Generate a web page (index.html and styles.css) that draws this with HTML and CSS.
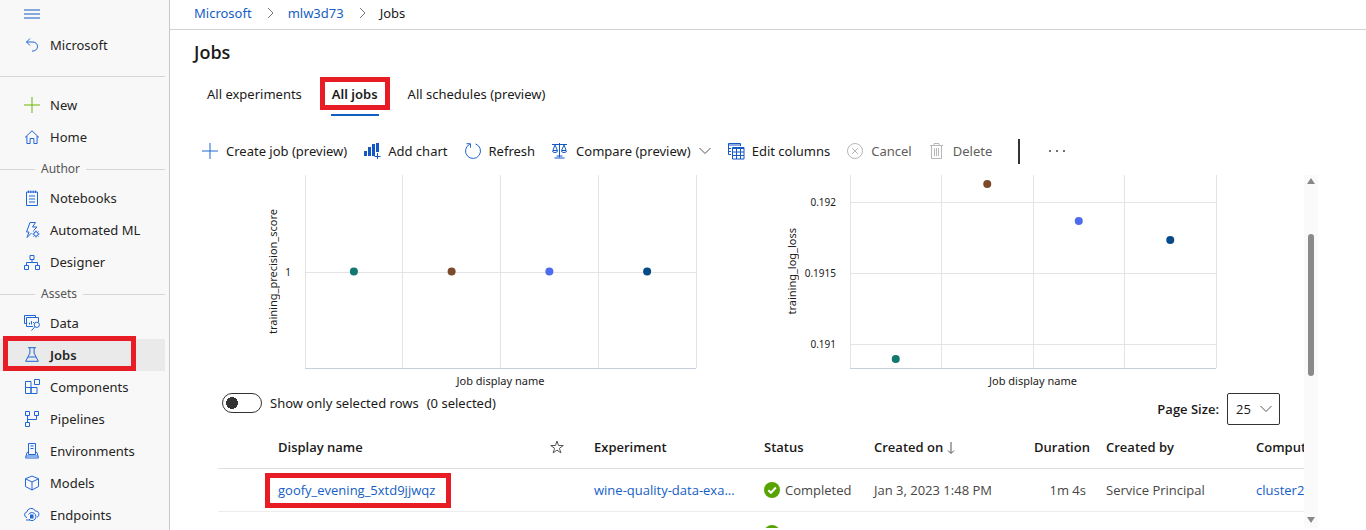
FILE: index.html
```html
<!DOCTYPE html>
<html lang="en">
<head>
<meta charset="utf-8">
<meta name="viewport" content="width=device-width, initial-scale=1">
<title>Jobs</title>
<link rel="stylesheet" href="styles.css">
</head>
<body>
<div class="shell">
  <nav class="sidebar" aria-label="Workspace">
    <button class="menu-button" type="button" aria-label="Toggle menu">
      <svg class="icon icon-strong" viewBox="0 0 16 16"><path d="M0 4h16M0 8h16M0 12h16"/></svg>
    </button>
    <a class="nav-item" href="#"><svg class="icon" viewBox="0 0 16 16"><path d="M6 1.500L2.500 5 6 8.500M2.500 5h6.500a4.200 4.200 0 0 1 0 9H8"/></svg>Microsoft</a>
    <hr class="nav-rule">
    <a class="nav-item" href="#"><svg class="icon icon-green" viewBox="0 0 16 16"><path d="M8 0v16M0 8h16"/></svg>New</a>
    <a class="nav-item" href="#"><svg class="icon" viewBox="0 0 16 16"><path d="M1 8.500L8 1.800l7 6.700M2.900 7v7.500h3.200v-5h3.800v5h3.200V7"/></svg>Home</a>
    <h2 class="nav-heading">Author</h2>
    <a class="nav-item" href="#"><svg class="icon" viewBox="0 0 16 16"><path d="M2.500 2v13.500h11V2zM4.500.5V3M6.800.5V3M9.200.5V3M11.500.5V3M5 6h6M5 9h6M5 12h6"/></svg>Notebooks</a>
    <a class="nav-item" href="#"><svg class="icon" viewBox="0 0 16 16"><path d="M7.500 11L3 15.500l2-5.500H2.500l3.500-9.500h5.500L8.500 5H13L9.500 8.500"/><circle cx="12" cy="12" r="2.200"/><path d="M12 8.500v1.300M12 14.200v1.300M8.500 12h1.300M14.200 12h1.300M9.500 9.500l.9.900M13.600 13.600l.9.900M14.500 9.500l-.9.900M10.400 13.600l-.9.900"/></svg>Automated ML</a>
    <a class="nav-item" href="#"><svg class="icon" viewBox="0 0 16 16"><path d="M6 1.500h4v4H6zM.5 11.500h4v4h-4zM11.500 11.500h4v4h-4zM8 5.500v3M2.500 11.500v-3h11v3"/></svg>Designer</a>
    <h2 class="nav-heading">Assets</h2>
    <a class="nav-item" href="#"><svg class="icon" viewBox="0 0 16 16"><path d="M2 8.500H.5v-8h11V2M9 11.500H2.500v-9h12v4.500M5.500 9.500v-2M7.500 9.500V6M9.500 8V7"/><circle cx="12.800" cy="9.800" r="2.600"/><path d="M11 11.700l-3.500 3.800"/></svg>Data</a>
    <a class="nav-item nav-item-current" href="#" aria-current="page"><svg class="icon" viewBox="0 0 16 16"><path d="M4 .7h8M5.900.7v5.400L1.700 14.300h12.600L10.100 6.100V.7M4 10h8"/></svg>Jobs</a>
    <a class="nav-item" href="#"><svg class="icon" viewBox="0 0 16 16"><path d="M1.500 2.500h5.500v6H1.500zM1.500 8.500h5.500v6H1.500zM7 8.500h6v6H7zM10.500.5h5v5h-5z"/></svg>Components</a>
    <a class="nav-item" href="#"><svg class="icon" viewBox="0 0 16 16"><path d="M1.500.5h4v4h-4zM10.500.5h4v4h-4zM1.500 11.500h4v4h-4zM3.500 4.500v7M12.500 4.500v4h-9"/></svg>Pipelines</a>
    <a class="nav-item" href="#"><svg class="icon" viewBox="0 0 16 16"><path d="M4.500 11.500V.5h7v11zM6.500 3h3M6.500 5.500h3M4.500 9L3 9.500l-1.500 5.500h13L13 9.500 11.500 9M2 13h12"/></svg>Environments</a>
    <a class="nav-item" href="#"><svg class="icon" viewBox="0 0 16 16"><path d="M8 1l6.500 2.800v7.700L8 15l-6.500-3.500V3.800zM1.500 3.800L8 7l6.500-3.200M8 7v8"/></svg>Models</a>
    <a class="nav-item" href="#"><svg class="icon" viewBox="0 0 16 16"><path d="M3 10.500A2.800 2.800 0 0 1 2.800 5 4.500 4.500 0 0 1 11.300 4a3.300 3.300 0 0 1 1.700 6.300M4.500 7.500A4 4 0 1 1 5 12.300M2 13h4"/><path class="solid" d="M6 7.500h3.500v4H6z"/></svg>Endpoints</a>
  </nav>

  <div class="main">
    <nav class="breadcrumb" aria-label="Breadcrumb">
      <a href="#">Microsoft</a>
      <svg class="crumb-arrow" viewBox="0 0 8 12"><path d="M2 1l5 5-5 5"/></svg>
      <a href="#">mlw3d73</a>
      <svg class="crumb-arrow" viewBox="0 0 8 12"><path d="M2 1l5 5-5 5"/></svg>
      <span>Jobs</span>
    </nav>
    <h1 class="title">Jobs</h1>
    <div class="tabs" role="tablist">
      <button class="tab" type="button" role="tab">All experiments</button>
      <button class="tab tab-current" type="button" role="tab" aria-selected="true">All jobs</button>
      <button class="tab" type="button" role="tab">All schedules (preview)</button>
    </div>

    <div class="toolbar">
      <button class="tool" type="button"><svg class="icon" viewBox="0 0 16 16"><path d="M8 0v16M0 8h16"/></svg>Create job (preview)</button>
      <button class="tool" type="button"><svg class="icon icon-strong" viewBox="0 0 16 16"><path class="solid" d="M0 8h3v5H0zM4 4h3v9H4zM8 1h3v12H8zM12 0h3v9h-3z"/><path d="M13.500 10v6M10.500 13.500h6"/></svg>Add chart</button>
      <button class="tool" type="button"><svg class="icon" viewBox="0 0 16 16"><path d="M4.800 1.200A7.500 7.500 0 1 0 10.500.9M1.500.7h4v4"/></svg>Refresh</button>
      <button class="tool" type="button"><svg class="icon icon-strong" viewBox="0 0 16 16"><path d="M0 1.500h15M7.500 0v14.500M2.500 15h10M4.500 13h6M3 2L.8 7.500h4.700zM12 2L9.500 7.500h4.700zM.5 8a2.500 1.500 0 0 0 5 0M9.500 8a2.500 1.500 0 0 0 5 0"/></svg>Compare (preview)<svg class="chevron" viewBox="0 0 12 8"><path d="M.5 1L6 6.500 11.500 1"/></svg></button>
      <button class="tool" type="button"><svg class="icon icon-strong" viewBox="0 0 16 16"><path d="M3 11.500H.5V.5h12V3M.5 2h12M.5 5.500H3M.5 8.500H3M4.500 4.500h11.500v11.500H4.500zM4.500 5.500H16M4.500 9H16M4.500 12.500H16M8.500 5v11M12.500 5v11"/></svg>Edit columns</button>
      <button class="tool tool-off" type="button" disabled><svg class="icon" viewBox="0 0 16 16"><circle cx="8" cy="8" r="7.500"/><path d="M5 5l6 6M11 5l-6 6"/></svg>Cancel</button>
      <button class="tool tool-off" type="button" disabled><svg class="icon" viewBox="0 0 16 16"><path d="M1 2.500h13M5 2.500v-2h5v2M2.500 2.500v13h10v-13M5.500 5v8M7.500 5v8M9.500 5v8"/></svg>Delete</button>
      <span class="divider"></span>
      <button class="more" type="button" aria-label="More actions"><svg class="dots" viewBox="0 0 16 4"><circle cx="1" cy="2" r="1"/><circle cx="8" cy="2" r="1"/><circle cx="15" cy="2" r="1"/></svg></button>
    </div>

    <div class="pane">
      <div class="content">
        <div class="charts">
          <figure class="chart chart-precision">
            <span class="y-title">training_precision_score</span>
            <div class="y-ticks"><span>1</span></div>
            <svg class="plot" role="img" aria-label="training_precision_score by job">
              <g class="grid"><line x1="0" x2="0" y1="0" y2="193"/><line x1="25%" x2="25%" y1="0" y2="193"/><line x1="50%" x2="50%" y1="0" y2="193"/><line x1="75%" x2="75%" y1="0" y2="193"/><line x1="100%" x2="100%" y1="0" y2="193"/><line x1="0" x2="100%" y1="97" y2="97"/></g>
              <line class="axis" x1="0" x2="100%" y1="193" y2="193"/>
              <circle class="teal" cx="12.500%" cy="96.500" r="4"/><circle class="brown" cx="37.500%" cy="96.500" r="4"/><circle class="violet" cx="62.500%" cy="96.500" r="4"/><circle class="navy" cx="87.500%" cy="96.500" r="4"/>
            </svg>
            <figcaption class="x-title">Job display name</figcaption>
          </figure>
          <figure class="chart chart-loss">
            <span class="y-title">training_log_loss</span>
            <div class="y-ticks"><span>0.192</span><span>0.1915</span><span>0.191</span></div>
            <svg class="plot" role="img" aria-label="training_log_loss by job">
              <g class="grid"><line x1="0" x2="0" y1="0" y2="193"/><line x1="25%" x2="25%" y1="0" y2="193"/><line x1="50%" x2="50%" y1="0" y2="193"/><line x1="75%" x2="75%" y1="0" y2="193"/><line x1="100%" x2="100%" y1="0" y2="193"/><line x1="0" x2="100%" y1="27" y2="27"/><line x1="0" x2="100%" y1="98" y2="98"/><line x1="0" x2="100%" y1="169" y2="169"/></g>
              <line class="axis" x1="0" x2="100%" y1="193" y2="193"/>
              <circle class="teal" cx="12.500%" cy="184" r="4"/><circle class="brown" cx="37.500%" cy="9" r="4"/><circle class="violet" cx="62.500%" cy="46" r="4"/><circle class="navy" cx="87.500%" cy="65" r="4"/>
            </svg>
            <figcaption class="x-title">Job display name</figcaption>
          </figure>
        </div>

        <div class="options">
          <label class="switch-label"><input class="switch" type="checkbox" role="switch"><span>Show only selected rows</span><span>(0 selected)</span></label>
          <div class="page-size">
            <label for="size">Page Size:</label>
            <div class="select-wrap">
              <select id="size" class="select"><option>25</option><option>50</option></select>
              <svg class="chevron" viewBox="0 0 12 8"><path d="M.5 1L6 6.500 11.500 1"/></svg>
            </div>
          </div>
        </div>

        <table class="jobs">
          <colgroup><col class="c-pick"><col><col class="c-star"><col class="c-exp"><col class="c-status"><col class="c-created"><col class="c-time"><col class="c-by"><col class="c-compute"></colgroup>
          <thead>
            <tr>
              <th></th><th>Display name</th>
              <th class="star"><svg class="star-icon" viewBox="0 0 14 14"><path d="M7 1l1.500 4.500h4.800L9.400 8.300l1.500 4.600L7 10.100l-3.900 2.800 1.500-4.600L.7 5.500h4.800z"/></svg></th>
              <th>Experiment</th><th>Status</th>
              <th>Created on <svg class="sort" viewBox="0 0 8 14"><path d="M4 1v11M1 9.500l3 3 3-3"/></svg></th>
              <th class="num">Duration</th><th>Created by</th><th>Compute</th>
            </tr>
          </thead>
          <tbody>
            <tr>
              <td></td><td><a class="marked" href="#">goofy_evening_5xtd9jjwqz</a></td><td></td>
              <td><a href="#">wine-quality-data-exa...</a></td>
              <td><span class="status"><svg class="check" viewBox="0 0 16 16"><circle cx="8" cy="8" r="8"/><path d="M4.300 8.200l2.600 2.600 5-5.300"/></svg>Completed</span></td>
              <td>Jan 3, 2023 1:48 PM</td><td class="num">1m 4s</td><td>Service Principal</td><td><a href="#">cluster2023</a></td>
            </tr>
            <tr>
              <td></td><td></td><td></td><td></td>
              <td><span class="status"><svg class="check" viewBox="0 0 16 16"><circle cx="8" cy="8" r="8"/><path d="M4.300 8.200l2.600 2.600 5-5.300"/></svg></span></td>
              <td></td><td></td><td></td><td></td>
            </tr>
          </tbody>
        </table>
      </div>
      <div class="scrollbar" aria-hidden="true">
        <span class="arrow arrow-up"></span>
        <span class="track"><span class="thumb"></span></span>
        <span class="arrow arrow-down"></span>
      </div>
    </div>
  </div>
</div>
</body>
</html>
```

FILE: styles.css
```css
* { box-sizing: border-box; }

body {
  margin: 0;
  background: #fff;
  color: #1b1a19;
  font: 13px/20px "Open Sans", "Noto Sans", sans-serif;
}

a { color: #1560c4; text-decoration: none; }
button { padding: 0; border: 0; background: none; color: inherit; font: inherit; }

.shell { display: flex; height: 100vh; overflow: hidden; }
.sidebar, .breadcrumb, .tabs, .toolbar, .chart, .switch-label { font-family: "Noto Sans", "Open Sans", sans-serif; }

/* Shared icon strokes */
svg { flex: none; fill: none; stroke: currentColor; overflow: visible; }
.icon { width: 16px; height: 16px; color: #1f66d6; }
.icon-green { color: #6bb700; }
.icon-strong { color: #1558c4; }
.solid { fill: currentColor; stroke: none; }
.chevron { width: 12px; height: 8px; color: #555; }

/* Sidebar */
.sidebar {
  flex: none;
  width: 170px;
  padding-right: 4px;
  border-right: 1px solid #c8c8c8;
  background: #f8f8f8;
  overflow: hidden;
}
.menu-button { display: flex; align-items: center; height: 29px; padding: 0 24px 2px; }
.nav-item {
  position: relative;
  display: flex;
  align-items: center;
  gap: 10px;
  height: 32px;
  padding-left: 24px;
  color: #252423;
}
.nav-item-current { background: #eaeaea; font-weight: 600; }
.nav-item-current::after {
  content: "";
  position: absolute;
  inset: -3px 29px 0 3px;
  border: 5px solid #e81c25;
}
.nav-rule { margin: 15px 0 12px; border: 0; border-top: 1px solid #d6d6d6; }
.nav-heading {
  display: flex;
  align-items: center;
  gap: 6px;
  height: 29px;
  margin: 0;
  padding-top: 3px;
  color: #555;
  font-size: 12px;
  font-weight: 400;
}
.nav-heading::before, .nav-heading::after { content: ""; height: 1px; background: #d6d6d6; }
.nav-heading::before { width: 35px; }
.nav-heading::after { flex: 1; }

/* Header */
.main { display: flex; flex: 1; flex-direction: column; min-width: 0; }
.breadcrumb {
  display: flex;
  flex: none;
  align-items: center;
  gap: 14px;
  height: 30px;
  padding: 0 24px 3px;
  border-bottom: 1px solid #d2d2d2;
}
.crumb-arrow { width: 8px; height: 12px; color: #777; }
.title { margin: 10px 24px 0; font-size: 18px; line-height: 24px; font-weight: 600; }
.tabs { display: flex; gap: 29px; margin: 14px 37px 0; }
.tab { position: relative; height: 38px; padding: 0 0 6px; }
.tab-current { padding: 0 1px 4px; border-bottom: 2px solid #0f5fbf; font-weight: 600; }
.tab-current::after {
  content: "";
  position: absolute;
  inset: -1px -11px 4px;
  border: 5px solid #e81c25;
}

/* Toolbar */
.toolbar { display: flex; flex: none; align-items: center; gap: 17px; height: 59px; padding: 11px 32px 0; }
.tool { display: flex; align-items: center; gap: 8px; white-space: nowrap; }
.tool-off { color: #605e5c; }
.tool-off .icon { color: #b8b8b8; }
.divider { width: 2px; height: 25px; margin: 0 12px 0 9px; background: #333; }
.more { display: flex; }
.dots { width: 16px; height: 4px; fill: #444; stroke: none; }

/* Scrolling pane */
.pane { display: flex; flex: 1; min-height: 0; margin: 0 48px 2px; }
.content { flex: 1; min-width: 0; overflow: hidden; }
.scrollbar { display: flex; flex: none; flex-direction: column; align-items: center; width: 14px; background: #fafafa; }
.arrow { border: 4px solid transparent; }
.arrow-up { border-bottom: 6px solid #888; border-top: 0; margin-top: 3px; }
.arrow-down { border-top: 6px solid #888; border-bottom: 0; margin-bottom: 5px; }
.track { flex: 1; width: 6px; padding-top: 50px; }
.thumb { display: block; height: 50%; border-radius: 3px; background: #8a8a8a; }

/* Charts */
.charts { display: grid; grid-template-columns: 478fr 608fr; }
.chart {
  display: grid;
  grid-template-columns: 20px 48px 1fr;
  grid-template-rows: 193px 24px;
  margin: 0;
  font-size: 11px;
  line-height: 16px;
}
.chart-precision { grid-template-columns: 20px 22px 1fr; padding-left: 45px; }
.chart-loss { padding: 0 88px 0 86px; }
.y-title { place-self: center; writing-mode: vertical-rl; transform: rotate(180deg); white-space: nowrap; }
.y-ticks { display: flex; flex-direction: column; gap: 55px; padding: 19px 14px 0 0; text-align: right; font-size: 10px; }
.chart-precision .y-ticks { padding-top: 89px; }
.plot { width: 100%; height: 193px; }
.grid { stroke: #e4e4e4; shape-rendering: crispEdges; }
.axis { stroke: #c6cfdc; shape-rendering: crispEdges; }
.plot circle { stroke: none; }
.teal { fill: #127870; }
.brown { fill: #7b4a2b; }
.violet { fill: #4f6bed; }
.navy { fill: #064b86; }
.x-title { grid-column: 3; padding-top: 5px; text-align: center; }

/* Options above the table */
.options { display: flex; justify-content: space-between; padding: 1px 24px 0 4px; }
.switch-label { display: flex; align-items: center; gap: 8px; height: 20px; }
.switch {
  appearance: none;
  width: 40px;
  height: 20px;
  margin: 0;
  border: 1px solid #333;
  border-radius: 10px;
  background: radial-gradient(circle at 9px 9px, #333 0 6px, transparent 6px);
}
.page-size { display: flex; align-items: center; gap: 8px; font-weight: 600; }
.select-wrap { display: grid; align-items: center; }
.select-wrap > * { grid-area: 1 / 1; }
.select-wrap .chevron { justify-self: end; margin-right: 8px; pointer-events: none; }
.select {
  appearance: none;
  width: 53px;
  height: 32px;
  padding: 0 8px;
  border: 1px solid #333;
  border-radius: 2px;
  background: #fff;
  color: inherit;
  font: inherit;
  font-weight: 400;
}

/* Jobs table */
.jobs { width: calc(100% + 92px); border-collapse: collapse; table-layout: fixed; }
.jobs th, .jobs td { padding: 0 10px; text-align: left; white-space: nowrap; }
.jobs th { height: 43px; padding-top: 2px; border-bottom: 1px solid #dedede; font-weight: 600; }
.jobs td { height: 43px; border-bottom: 1px solid #ececec; color: #484644; }
.jobs td a { color: #1560c4; }
.jobs .num { text-align: right; }
.jobs .star { text-align: center; }
.c-pick { width: 50px; }
.c-star { width: 54px; }
.c-exp { width: 170px; }
.c-status { width: 110px; }
.c-created { width: 160px; }
.c-time { width: 72px; }
.c-by { width: 150px; }
.c-compute { width: 150px; }
.star-icon { width: 14px; height: 14px; color: #555; vertical-align: -2px; }
.sort { width: 8px; height: 14px; color: #555; vertical-align: -3px; }
.marked { position: relative; }
.marked::after {
  content: "";
  position: absolute;
  inset: -8px -16px -9px -13px;
  border: 5px solid #e81c25;
}
.status { display: flex; align-items: center; gap: 5px; }
.check { width: 16px; height: 16px; fill: none; stroke: #fff; stroke-width: 2; }
.check circle { fill: #57a300; stroke: none; }
```
